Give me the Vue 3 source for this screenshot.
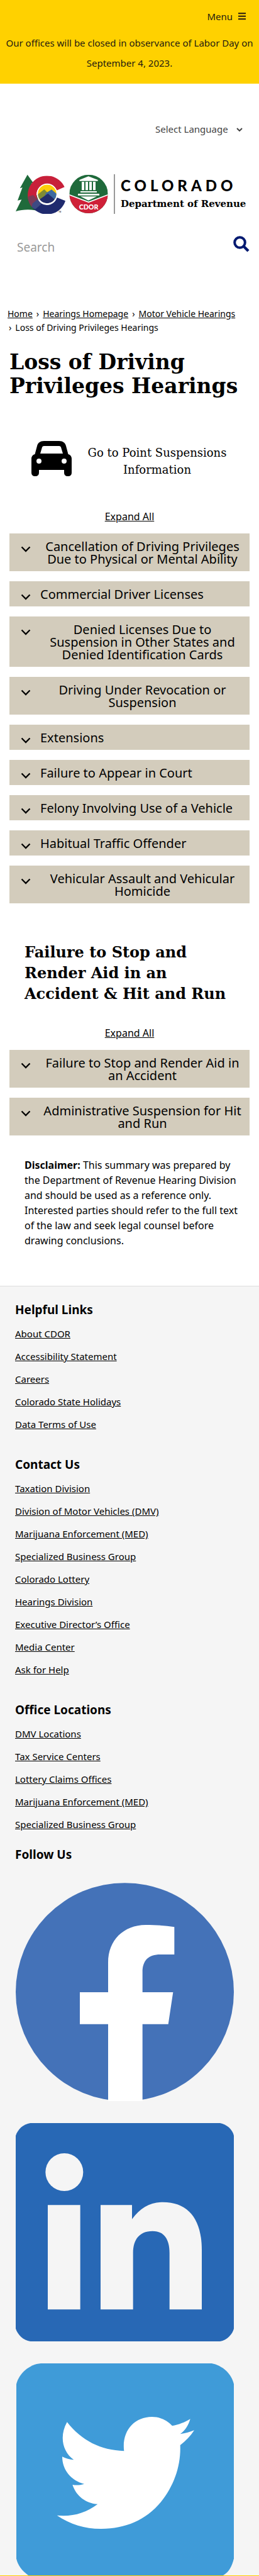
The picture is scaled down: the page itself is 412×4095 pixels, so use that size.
<script setup>
import { ref } from 'vue'

const query = ref('')

const hearings = [
  'Cancellation of Driving Privileges Due to Physical or Mental Ability',
  'Commercial Driver Licenses',
  'Denied Licenses Due to Suspension in Other States and Denied Identification Cards',
  'Driving Under Revocation or Suspension',
  'Extensions',
  'Failure to Appear in Court',
  'Felony Involving Use of a Vehicle',
  'Habitual Traffic Offender',
  'Vehicular Assault and Vehicular Homicide',
]
const failures = [
  'Failure to Stop and Render Aid in an Accident',
  'Administrative Suspension for Hit and Run',
]
const groups = [
  {
    title: 'Helpful Links',
    links: ['About CDOR', 'Accessibility Statement', 'Careers', 'Colorado State Holidays', 'Data Terms of Use'],
  },
  {
    title: 'Contact Us',
    links: [
      'Taxation Division',
      'Division of Motor Vehicles (DMV)',
      'Marijuana Enforcement (MED)',
      'Specialized Business Group',
      'Colorado Lottery',
      'Hearings Division',
      'Executive Director’s Office',
      'Media Center',
      'Ask for Help',
    ],
  },
  {
    title: 'Office Locations',
    links: [
      'DMV Locations',
      'Tax Service Centers',
      'Lottery Claims Offices',
      'Marijuana Enforcement (MED)',
      'Specialized Business Group',
    ],
  },
]
</script>

<template>
  <div class="page">
    <header class="banner">
      <button class="menu" type="button">
        Menu
        <svg width="12" height="12" viewBox="0 0 12 12" aria-hidden="true">
          <path d="M0 1.2h12M0 5.7h12M0 10.2h12" stroke="currentColor" stroke-width="2" />
        </svg>
      </button>
      <p class="notice">Our offices will be closed in observance of Labor Day on September 4, 2023.</p>
    </header>

    <div class="language">
      <select aria-label="Select Language">
        <option>Select Language</option>
      </select>
      <svg class="language-arrow" width="10" height="6" viewBox="0 0 10 6" aria-hidden="true">
        <path d="M1 1l4 4 4-4" fill="none" stroke="currentColor" stroke-width="2" />
      </svg>
    </div>

    <a class="brand" href="#">
      <svg class="emblem" viewBox="75 111 444 189" role="img" aria-label="State of Colorado CDOR">
        <defs>
          <clipPath id="c-shape">
            <path d="M308 172A92 92 0 1 0 312 238L272 222A50 50 0 1 1 270 188Z" />
          </clipPath>
          <clipPath id="sun"><circle cx="225" cy="205" r="45" /></clipPath>
          <clipPath id="seal"><circle cx="423" cy="205" r="92" /></clipPath>
        </defs>
        <path
          fill="#1f6a3b"
          d="M131 113L160 154 150 154 172 188 160 188 190 232 178 232 200 292C160 276 115 276 75 288L103 232 84 236 107 174 95 178Z"
        />
        <g clip-path="url(#c-shape)">
          <path fill="#c8203a" d="M125 105h200v100H225L150 270H125Z" />
          <path fill="#1f2a6e" d="M145 270L225 205H325v100H125Z" />
          <path fill="#7d3a55" d="M133 218L158 210 185 236 152 268 134 240Z" />
          <path fill="#3d4a83" d="M156 250L185 226 196 254 168 278 150 268Z" />
        </g>
        <g clip-path="url(#sun)">
          <path fill="#fccf0a" d="M175 155h100v100H175Z" />
          <path fill="#7f8b35" d="M170 216L211 183 245 216 230 255H170Z" />
          <path fill="#3d6aa0" d="M220 200L246 184 285 216V230H205Z" />
          <path fill="#222c6b" d="M170 244L229 203 285 252V260H170Z" />
        </g>
        <circle cx="225" cy="205" r="47" fill="none" stroke="#fff" stroke-width="5" />
        <text x="279" y="295" class="tm">TM</text>
        <g clip-path="url(#seal)">
          <path fill="#1f6a3b" d="M331 113h184v184H331Z" />
          <path fill="#cf2038" d="M331 210L423 246 515 210V297H331Z" />
          <path fill="none" stroke="#fff" stroke-width="5" d="M328 208L423 244 518 208" />
        </g>
        <path
          fill="#fff"
          d="M422 121L467 138V143H379V138ZM390 147h12v40h-12ZM408 147h12v40h-12ZM426 147h12v40h-12ZM444 147h12v40h-12ZM384 192h78v6H384ZM372 204h102v8H372ZM384 217h78L422 236Z"
        />
        <text x="423" y="279" text-anchor="middle" class="seal-text">CDOR</text>
      </svg>
      <span class="wordmark">
        <span class="state">COLORADO</span>
        <span class="department">Department of Revenue</span>
      </span>
    </a>

    <form class="search" role="search" @submit.prevent>
      <input v-model="query" type="text" placeholder="Search" aria-label="Search" />
      <button type="submit" aria-label="Search">
        <svg width="26" height="26" viewBox="0 0 26 26" aria-hidden="true">
          <circle cx="10.5" cy="10.5" r="8.3" fill="none" stroke="currentColor" stroke-width="4" />
          <path d="M16 16l8 8" stroke="currentColor" stroke-width="4.4" />
        </svg>
      </button>
    </form>

    <nav class="breadcrumb" aria-label="Breadcrumb">
      <a href="#">Home</a><span class="sep">›</span><a href="#">Hearings Homepage</a><span class="sep">›</span><a href="#">Motor Vehicle Hearings</a>
      <span class="current"><span class="sep">›</span>Loss of Driving Privileges Hearings</span>
    </nav>

    <main>
      <h1>Loss of Driving Privileges Hearings</h1>

      <a class="points" href="#">
        <svg width="64" height="56" viewBox="0 0 64 56" aria-hidden="true">
          <path
            fill-rule="evenodd"
            d="M20 0H44C50 0 54 3 55 8L58.500 21C62 22 64 25 64 28V50C64 54 62 56 58 56C54 56 52 54 52 50V46H12V50C12 54 10 56 6 56C2 56 0 54 0 50V28C0 25 2 22 5.500 21L9 8C10 3 14 0 20 0ZM20 8C18 8 17.500 9 17 10L14 20H50L47 10C46.500 9 46 8 44 8ZM12 28A4 4 0 1 0 12 36A4 4 0 1 0 12 28ZM52 28A4 4 0 1 0 52 36A4 4 0 1 0 52 28Z"
          />
        </svg>
        <span>Go to Point Suspensions Information</span>
      </a>

      <button class="expand" type="button">Expand All</button>
      <div class="accordion">
        <button v-for="item in hearings" :key="item" class="panel" type="button" aria-expanded="false">
          <svg width="16" height="10" viewBox="0 0 16 10" aria-hidden="true">
            <path d="M1.500 1.500L8 8l6.500-6.500" fill="none" stroke="currentColor" stroke-width="2.300" />
          </svg>
          <span>{{ item }}</span>
        </button>
      </div>

      <h2>Failure to Stop and Render Aid in an Accident &amp; Hit and Run</h2>
      <button class="expand" type="button">Expand All</button>
      <div class="accordion">
        <button v-for="item in failures" :key="item" class="panel" type="button" aria-expanded="false">
          <svg width="16" height="10" viewBox="0 0 16 10" aria-hidden="true">
            <path d="M1.500 1.500L8 8l6.500-6.500" fill="none" stroke="currentColor" stroke-width="2.300" />
          </svg>
          <span>{{ item }}</span>
        </button>
      </div>

      <p class="disclaimer">
        <strong>Disclaimer:</strong> This summary was prepared by the Department of Revenue Hearing Division and
        should be used as a reference only. Interested parties should refer to the full text of the law and seek
        legal counsel before drawing conclusions.
      </p>
    </main>

    <footer>
      <section v-for="group in groups" :key="group.title" class="group">
        <h3>{{ group.title }}</h3>
        <ul>
          <li v-for="link in group.links" :key="link"><a href="#">{{ link }}</a></li>
        </ul>
      </section>

      <h3>Follow Us</h3>
      <div class="social">
        <a href="#" aria-label="Facebook">
          <svg viewBox="75 39 1041 1041" aria-hidden="true">
            <circle cx="595.500" cy="560" r="520.500" fill="#4472b8" />
            <path
              fill="#fff"
              d="M516 1082V713H381V561H516V420C516 312 590 241 695 240C745 240 790 243 832 250V381H765C708 381 680 410 680 465V561H826L803 713H680V1082Z"
            />
          </svg>
        </a>
        <a href="#" aria-label="LinkedIn">
          <svg viewBox="75 45 1041 1041" aria-hidden="true">
            <path
              fill="#2868b5"
              d="M145 45H1050C1080 50 1110 75 1116 105V1025C1110 1050 1085 1080 1050 1086H145C110 1080 85 1055 75 1025V105C85 75 110 50 145 45Z"
            />
            <circle cx="307" cy="279" r="90" fill="#f5f5f5" />
            <path
              fill="#f5f5f5"
              d="M228 436H383V934H228ZM480 436H630V503C670 450 715 422 778 422C900 422 963 505 963 650V934H809V665C809 595 780 560 728 560C670 560 635 595 635 665V934H480Z"
            />
          </svg>
        </a>
        <a href="#" aria-label="Twitter">
          <svg viewBox="75 81 1041 1011" aria-hidden="true">
            <path
              fill="#3f9bd8"
              d="M195 81H1010C1060 90 1105 130 1116 180V1012C1108 1045 1095 1075 1065 1092H135C105 1070 85 1045 78 1012V180C90 130 140 85 195 81Z"
            />
            <path
              fill="#fff"
              d="M320 361C390 450 480 495 592 499C580 405 640 336 725 336C762 336 796 351 822 379C852 374 882 362 908 346C900 375 884 401 860 418C883 415 905 409 927 400C910 427 886 451 860 471C864 570 830 665 768 742C695 830 595 871 480 870C405 869 335 849 272 806C345 813 410 795 466 752C410 750 363 713 346 660C365 663 382 662 402 656C340 641 297 590 297 526C315 535 333 540 352 541C298 503 282 428 320 361Z"
            />
          </svg>
        </a>
      </div>
    </footer>
    <div class="status-bar"></div>
  </div>
</template>

<style>
body {
  margin: 0;
  background: #fff;
}
</style>

<style scoped>
.page {
  overflow: hidden;
  color: #000;
  font-family: "Noto Sans", "Open Sans", sans-serif;
  font-size: 15px;
  line-height: 24px;
}
h1,
h2,
h3,
p,
ul {
  margin: 0;
  padding: 0;
}
a {
  color: inherit;
}
button {
  border: 0;
  padding: 0;
  background: none;
  color: inherit;
  font: inherit;
}
svg {
  display: block;
  flex: none;
}
.banner {
  display: flex;
  flex-direction: column;
  padding-bottom: 17px;
  background: #ffd100;
  color: #241a10;
}
.menu {
  display: flex;
  align-items: center;
  align-self: flex-end;
  gap: 9px;
  height: 52px;
  margin-right: 21px;
}
.notice {
  line-height: 32px;
  text-align: center;
}
.language {
  position: relative;
  width: fit-content;
  margin: 56px 24px 0 auto;
  color: #444;
}
.language select {
  appearance: none;
  display: block;
  height: 32px;
  border: 0;
  padding: 0 25px 0 0;
  background: none;
  color: inherit;
  font: inherit;
}
.language-arrow {
  position: absolute;
  top: 14px;
  right: 2px;
  pointer-events: none;
}
.brand {
  display: flex;
  margin: 56px 20px 0 25px;
  text-decoration: none;
}
.emblem {
  width: 148px;
  height: 63px;
}
.tm {
  font: 9px "Liberation Sans", sans-serif;
}
.seal-text {
  fill: #fff;
  font: 900 32px Lato, sans-serif;
}
.wordmark {
  display: flex;
  flex-direction: column;
  margin-left: 8px;
  border-left: 2px solid #999;
  padding-left: 9px;
  white-space: nowrap;
}
.state {
  padding-top: 3px;
  font: 900 24px/30px Lato, sans-serif;
  letter-spacing: 6px;
}
.department {
  font: bold 15px/28px "DejaVu Serif", serif;
}
.search {
  display: flex;
  align-items: flex-start;
  height: 44px;
  margin: 31px 15px 0 27px;
}
.search input {
  flex: 1;
  min-width: 0;
  height: 44px;
  box-sizing: border-box;
  border: 0;
  padding: 0;
  outline: 0;
  background: none;
  color: #222;
  font: inherit;
  font-size: 19px;
}
.search input::placeholder {
  color: #999;
  opacity: 1;
}
.search button {
  margin-top: 4px;
  color: #001970;
}
.breadcrumb {
  margin: 73px 12px 0;
  font-size: 14px;
  line-height: 22px;
}
.sep {
  padding: 0 6px;
}
.current {
  display: block;
}
.current .sep {
  padding-left: 2px;
}
h1 {
  margin: 25px 12px 0 15px;
  font: bold 33px/38px "DejaVu Serif", serif;
}
.points {
  display: flex;
  gap: 20px;
  margin: 68px 50px 0;
  font: 18px/27px "DejaVu Serif", serif;
  text-decoration: none;
}
.points span {
  flex: 1;
  margin: 5px -4px 0 0;
  text-align: center;
}
.expand {
  display: block;
  margin: 49px auto 15px;
  font-size: 16px;
  text-decoration: underline;
}
.accordion {
  display: grid;
  gap: 16px;
  margin: 0 15px;
}
.panel {
  display: flex;
  align-items: flex-start;
  gap: 15px;
  padding: 11px 8px 9px 18px;
  background: #d3ccbc;
  font-size: 20px;
  line-height: 20px;
  text-align: center;
}
.panel svg {
  margin-top: 9px;
}
h2 {
  margin: 61px 36px 0 39px;
  font: bold 24px/33px "DejaVu Serif", serif;
}
h2 + .expand {
  margin-top: 34px;
}
.disclaimer {
  margin: 35px 33px 60px 39px;
  font-size: 16px;
}
footer {
  border-top: 1px solid #ddd;
  padding: 25px 40px 0 24px;
  background: #f5f5f5;
}
h3 {
  font-size: 19px;
  line-height: 24px;
}
ul {
  list-style: none;
}
.group ul {
  margin: 8px 0 34px;
}
.group:nth-of-type(3) ul {
  margin-bottom: 18px;
}
li {
  line-height: 36px;
}
.social {
  display: grid;
  gap: 35px;
  margin: 33px 0 0 1px;
}
.social svg {
  width: 100%;
  height: auto;
}
.status-bar {
  height: 1px;
  background: #ffd100;
}
</style>
